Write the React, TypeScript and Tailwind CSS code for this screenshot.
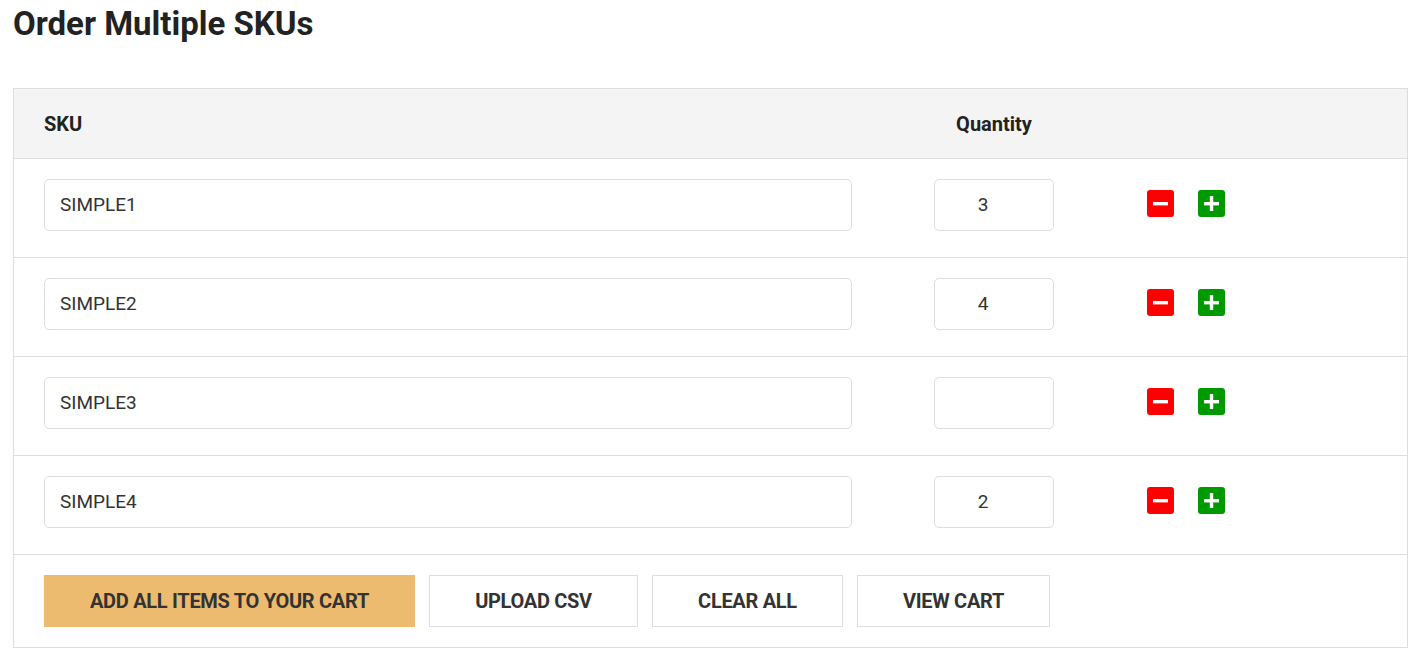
import React from "react";

interface SkuRow {
  sku: string;
  qty: string;
}

const rows: SkuRow[] = [
  { sku: "SIMPLE1", qty: "3" },
  { sku: "SIMPLE2", qty: "4" },
  { sku: "SIMPLE3", qty: "" },
  { sku: "SIMPLE4", qty: "2" },
];

function MinusIcon() {
  return (
    <svg viewBox="0 0 27 27" className="w-[27px] h-[27px]">
      <rect x="0" y="0" width="27" height="27" rx="3" fill="#ff0000" />
      <rect x="6" y="12" width="15" height="3.4" fill="#ffffff" />
    </svg>
  );
}

function PlusIcon() {
  return (
    <svg viewBox="0 0 27 27" className="w-[27px] h-[27px]">
      <rect x="0" y="0" width="27" height="27" rx="3" fill="#009a00" />
      <rect x="6" y="12" width="15" height="3.4" fill="#ffffff" />
      <rect x="11.8" y="6" width="3.4" height="15" fill="#ffffff" />
    </svg>
  );
}

function OrderRow({ sku, qty }: SkuRow) {
  return (
    <div className="flex items-center pl-[30px] pt-[20px] pb-[26px] border-b border-[#dddddd]">
      <div className="w-[808px] h-[52px] flex items-center px-[15px] border border-[#dddddd] rounded-[5px] text-[19px] text-[#333333]">
        {sku}
      </div>
      <div className="ml-[82px] w-[120px] h-[52px] flex items-center justify-center pr-[22px] border border-[#dddddd] rounded-[5px] text-[19px] text-[#333333]">
        {qty}
      </div>
      <div className="ml-[93px] flex items-center gap-x-[24px] -mt-[3px]">
        <MinusIcon />
        <PlusIcon />
      </div>
    </div>
  );
}

const btn =
  "h-[52px] text-[20px] font-bold uppercase text-[#333333] tracking-[-0.3px]";

export default function App() {
  return (
    <div
      className="min-h-screen bg-white text-[#222222]"
      style={{ fontFamily: "Roboto, 'Liberation Sans', sans-serif" }}
    >
      <h1 className="pl-[13px] pt-[5px] text-[33px] leading-[38px] font-bold">
        Order Multiple SKUs
      </h1>
      <div className="mt-[45px] ml-[13px] w-[1395px] border border-[#dddddd]">
        <div className="flex items-center h-[70px] bg-[#f4f4f4] border-b border-[#dddddd] pl-[30px] text-[20px] font-bold text-[#222222]">
          <span className="w-[808px]">SKU</span>
          <span className="ml-[82px] w-[120px] text-center">Quantity</span>
        </div>
        {rows.map((r) => (
          <OrderRow key={r.sku} sku={r.sku} qty={r.qty} />
        ))}
        <div className="flex items-center gap-x-[14px] pl-[30px] pt-[20px] pb-[20px]">
          <button className={`${btn} w-[371px] bg-[#edbb6f]`}>
            Add all items to your cart
          </button>
          <button className={`${btn} w-[209px] border border-[#dddddd] bg-white`}>
            Upload CSV
          </button>
          <button className={`${btn} w-[191px] border border-[#dddddd] bg-white`}>
            Clear all
          </button>
          <button className={`${btn} w-[193px] border border-[#dddddd] bg-white`}>
            View cart
          </button>
        </div>
      </div>
    </div>
  );
}
